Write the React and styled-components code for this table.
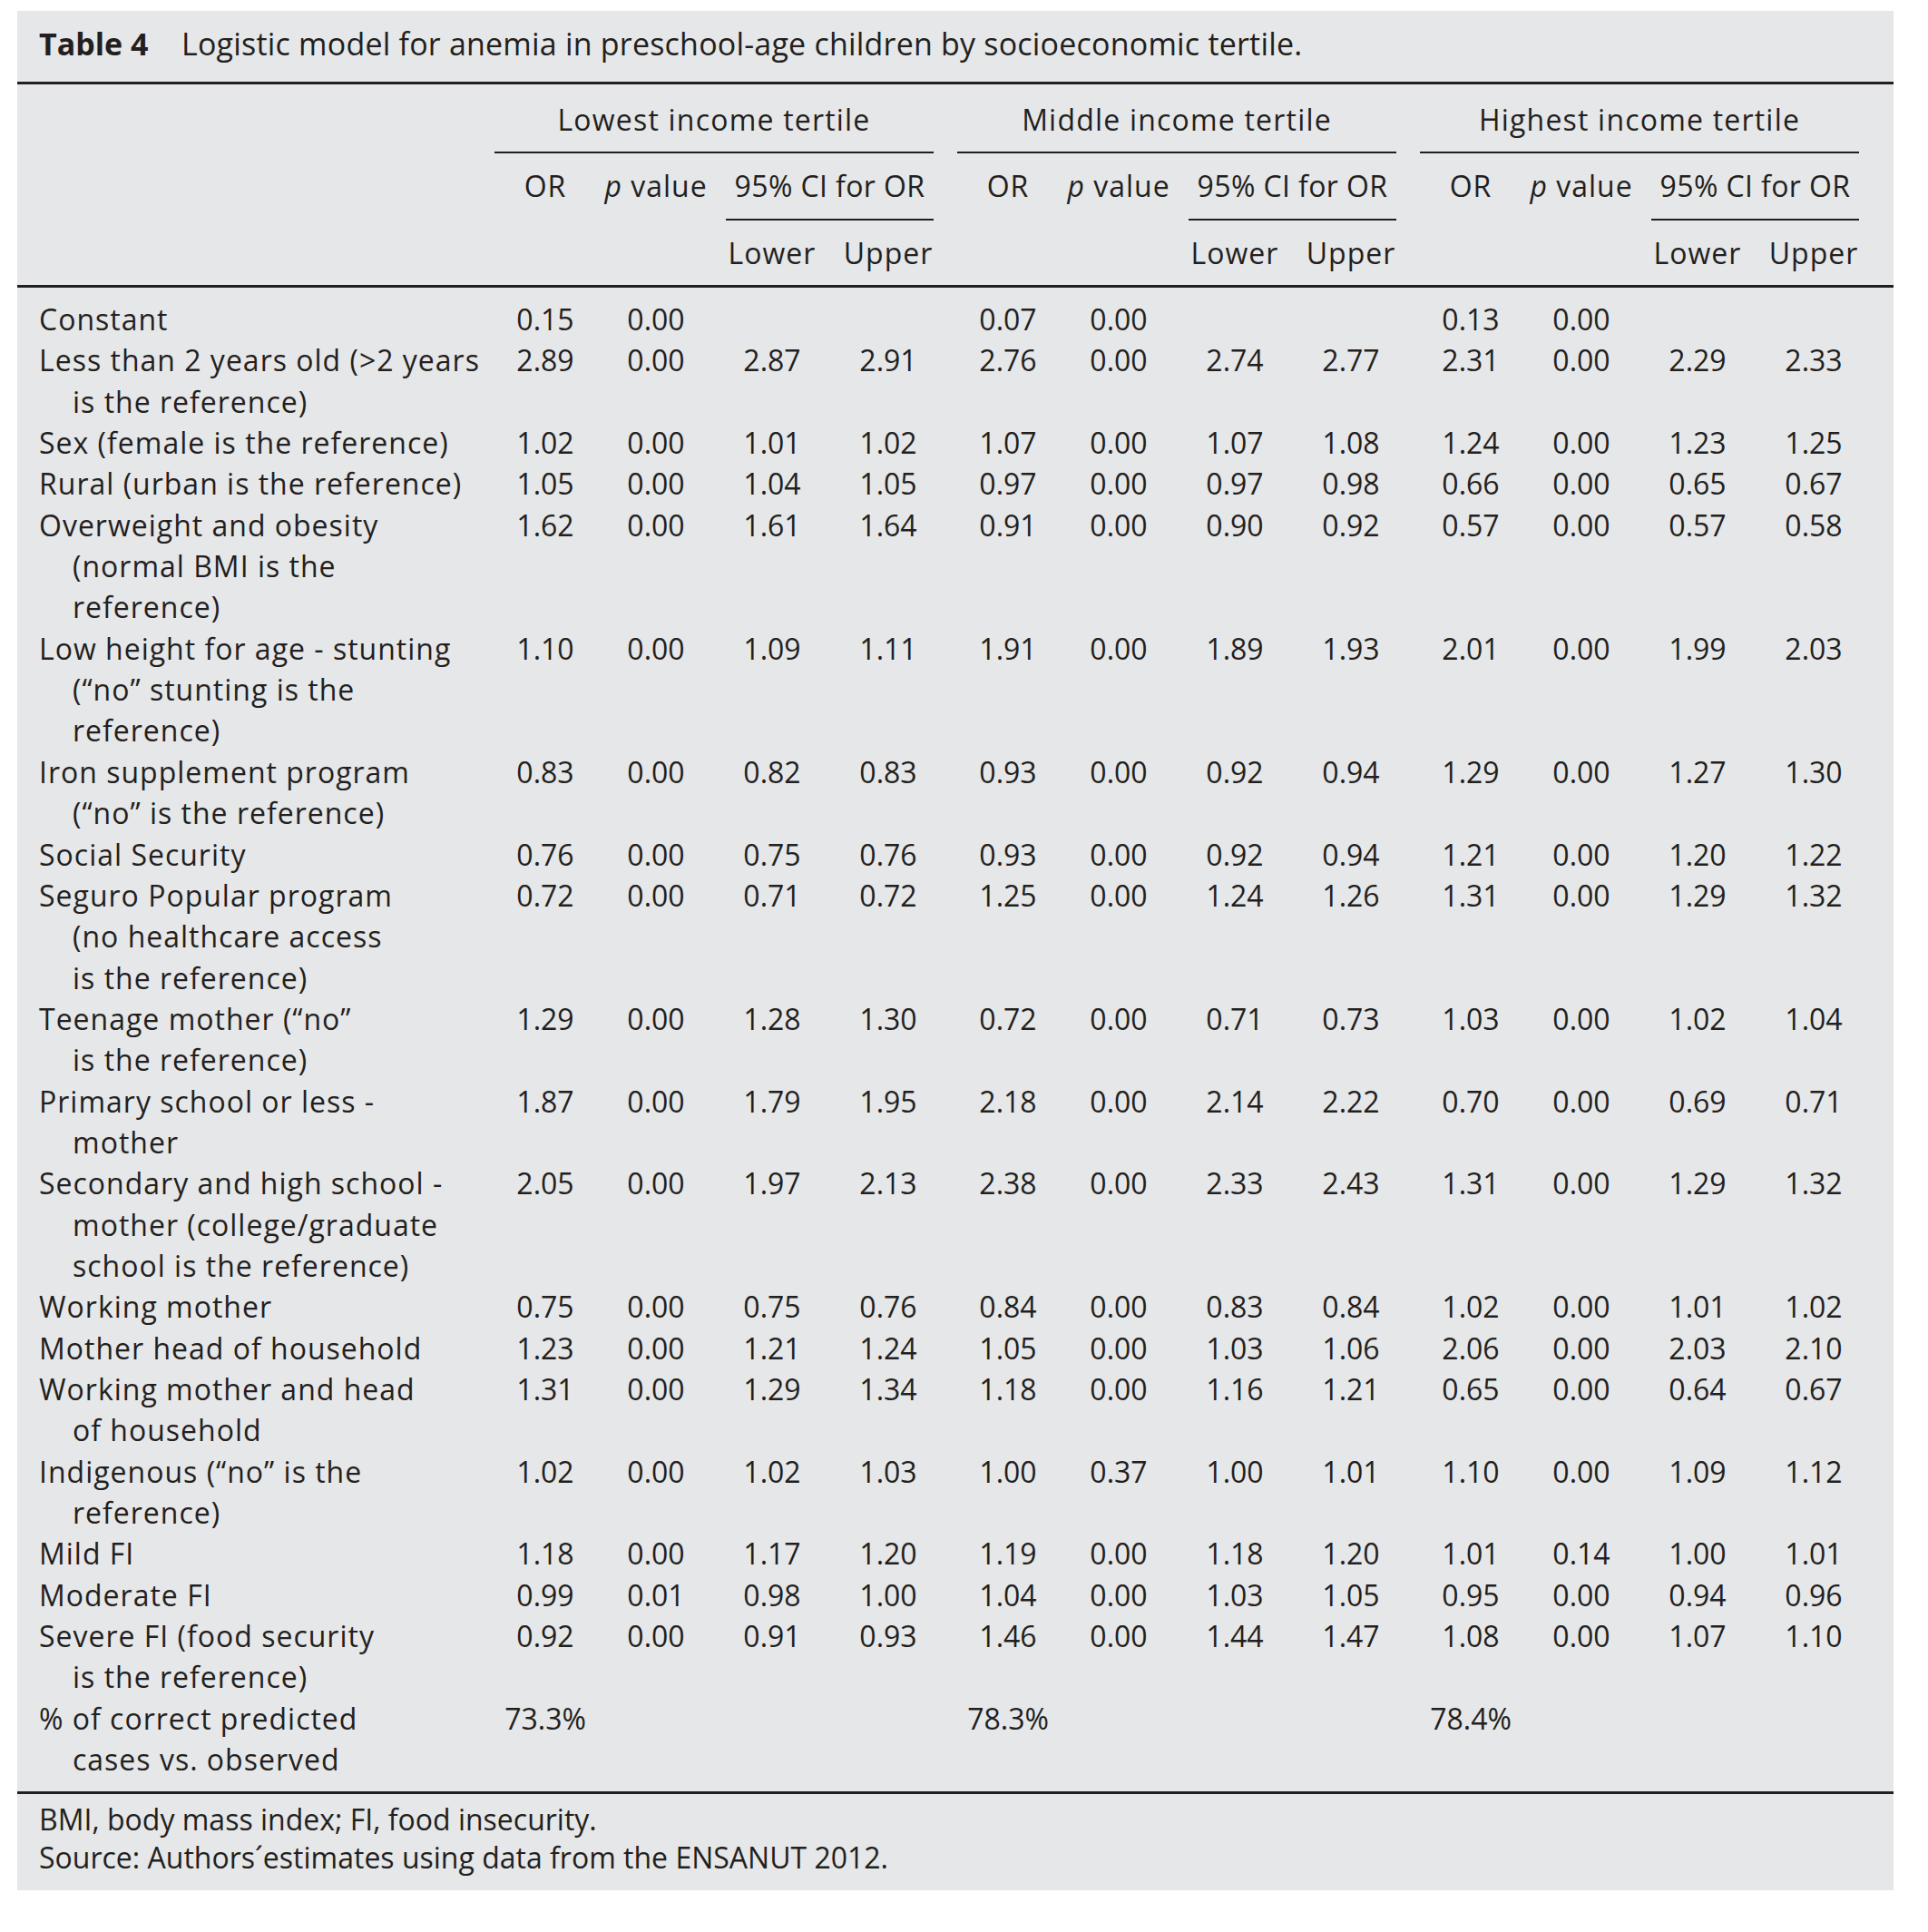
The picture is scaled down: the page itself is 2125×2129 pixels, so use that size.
import React from 'react';
import styled, { createGlobalStyle } from 'styled-components';

const GlobalStyle = createGlobalStyle`
  html, body {
    margin: 0;
    padding: 0;
    background: #ffffff;
  }
  body {
    font-family: "Open Sans", "Liberation Sans", sans-serif;
    color: #231f20;
  }
`;

const groups = ['Lowest income tertile', 'Middle income tertile', 'Highest income tertile'];

const rows = [
  { label: ['Constant'], data: [['0.15', '0.00', '', ''], ['0.07', '0.00', '', ''], ['0.13', '0.00', '', '']] },
  { label: ['Less than 2 years old (>2 years', 'is the reference)'], data: [['2.89', '0.00', '2.87', '2.91'], ['2.76', '0.00', '2.74', '2.77'], ['2.31', '0.00', '2.29', '2.33']] },
  { label: ['Sex (female is the reference)'], data: [['1.02', '0.00', '1.01', '1.02'], ['1.07', '0.00', '1.07', '1.08'], ['1.24', '0.00', '1.23', '1.25']] },
  { label: ['Rural (urban is the reference)'], data: [['1.05', '0.00', '1.04', '1.05'], ['0.97', '0.00', '0.97', '0.98'], ['0.66', '0.00', '0.65', '0.67']] },
  { label: ['Overweight and obesity', '(normal BMI is the', 'reference)'], data: [['1.62', '0.00', '1.61', '1.64'], ['0.91', '0.00', '0.90', '0.92'], ['0.57', '0.00', '0.57', '0.58']] },
  { label: ['Low height for age - stunting', '(\u201cno\u201d stunting is the', 'reference)'], data: [['1.10', '0.00', '1.09', '1.11'], ['1.91', '0.00', '1.89', '1.93'], ['2.01', '0.00', '1.99', '2.03']] },
  { label: ['Iron supplement program', '(\u201cno\u201d is the reference)'], data: [['0.83', '0.00', '0.82', '0.83'], ['0.93', '0.00', '0.92', '0.94'], ['1.29', '0.00', '1.27', '1.30']] },
  { label: ['Social Security'], data: [['0.76', '0.00', '0.75', '0.76'], ['0.93', '0.00', '0.92', '0.94'], ['1.21', '0.00', '1.20', '1.22']] },
  { label: ['Seguro Popular program', '(no healthcare access', 'is the reference)'], data: [['0.72', '0.00', '0.71', '0.72'], ['1.25', '0.00', '1.24', '1.26'], ['1.31', '0.00', '1.29', '1.32']] },
  { label: ['Teenage mother (\u201cno\u201d', 'is the reference)'], data: [['1.29', '0.00', '1.28', '1.30'], ['0.72', '0.00', '0.71', '0.73'], ['1.03', '0.00', '1.02', '1.04']] },
  { label: ['Primary school or less -', 'mother'], data: [['1.87', '0.00', '1.79', '1.95'], ['2.18', '0.00', '2.14', '2.22'], ['0.70', '0.00', '0.69', '0.71']] },
  { label: ['Secondary and high school -', 'mother (college/graduate', 'school is the reference)'], data: [['2.05', '0.00', '1.97', '2.13'], ['2.38', '0.00', '2.33', '2.43'], ['1.31', '0.00', '1.29', '1.32']] },
  { label: ['Working mother'], data: [['0.75', '0.00', '0.75', '0.76'], ['0.84', '0.00', '0.83', '0.84'], ['1.02', '0.00', '1.01', '1.02']] },
  { label: ['Mother head of household'], data: [['1.23', '0.00', '1.21', '1.24'], ['1.05', '0.00', '1.03', '1.06'], ['2.06', '0.00', '2.03', '2.10']] },
  { label: ['Working mother and head', 'of household'], data: [['1.31', '0.00', '1.29', '1.34'], ['1.18', '0.00', '1.16', '1.21'], ['0.65', '0.00', '0.64', '0.67']] },
  { label: ['Indigenous (\u201cno\u201d is the', 'reference)'], data: [['1.02', '0.00', '1.02', '1.03'], ['1.00', '0.37', '1.00', '1.01'], ['1.10', '0.00', '1.09', '1.12']] },
  { label: ['Mild FI'], data: [['1.18', '0.00', '1.17', '1.20'], ['1.19', '0.00', '1.18', '1.20'], ['1.01', '0.14', '1.00', '1.01']] },
  { label: ['Moderate FI'], data: [['0.99', '0.01', '0.98', '1.00'], ['1.04', '0.00', '1.03', '1.05'], ['0.95', '0.00', '0.94', '0.96']] },
  { label: ['Severe FI (food security', 'is the reference)'], data: [['0.92', '0.00', '0.91', '0.93'], ['1.46', '0.00', '1.44', '1.47'], ['1.08', '0.00', '1.07', '1.10']] },
  { label: ['% of correct predicted', 'cases vs. observed'], data: [['73.3%', '', '', ''], ['78.3%', '', '', ''], ['78.4%', '', '', '']] },
];

export default function App() {
  return (
    <>
      <GlobalStyle />
      <Page>
        <Panel>
          <Caption>
            <CaptionLabel>Table 4</CaptionLabel>
            Logistic model for anemia in preschool-age children by socioeconomic tertile.
          </Caption>

          <Head>
            <Row>
              <span />
              {groups.map((g) => (
                <GroupTitle key={g}>{g}</GroupTitle>
              ))}
            </Row>
            <Row>
              <span />
              {groups.map((g) => (
                <Group key={g}>
                  <HeadCell>OR</HeadCell>
                  <HeadCell>
                    <i>p</i> value
                  </HeadCell>
                  <CiHead>95% CI for OR</CiHead>
                </Group>
              ))}
            </Row>
            <Row>
              <span />
              {groups.map((g) => (
                <Group key={g}>
                  <span />
                  <span />
                  <HeadCell $low>Lower</HeadCell>
                  <HeadCell $low $shift>Upper</HeadCell>
                </Group>
              ))}
            </Row>
          </Head>

          <Body>
            {rows.map((r) => (
              <Row key={r.label[0]}>
                <Label>
                  {r.label.map((line, i) => (
                    <LabelLine key={line} $cont={i > 0}>
                      {line}
                    </LabelLine>
                  ))}
                </Label>
                {r.data.map((g, gi) => (
                  <Group key={gi}>
                    {g.map((v, vi) => (
                      <Num key={vi} $shift={vi === 3}>
                        {v}
                      </Num>
                    ))}
                  </Group>
                ))}
              </Row>
            ))}
          </Body>

          <Notes>
            <div>BMI, body mass index; FI, food insecurity.</div>
            <div>Source: Authors´estimates using data from the ENSANUT 2012.</div>
          </Notes>
        </Panel>
      </Page>
    </>
  );
}

const Page = styled.div`
  padding: 12px 0 40px 19px;
`;

const Panel = styled.div`
  width: 2068px;
  background: #e6e7e9;
  font-size: 32px;
`;

const Caption = styled.div`
  font-size: 34px;
  line-height: 45px;
  letter-spacing: 0.2px;
  padding: 14px 24px 19px;
  white-space: nowrap;
`;

const CaptionLabel = styled.b`
  display: inline-block;
  width: 157px;
  font-weight: 700;
  letter-spacing: 0;
`;

const Head = styled.div`
  border-top: 3px solid #231f20;
  padding-top: 16px;
`;

const Row = styled.div`
  display: grid;
  grid-template-columns: 476px repeat(3, 484px);
  column-gap: 26px;
  padding-left: 24px;
  line-height: 45.34px;
`;

const Group = styled.div`
  display: grid;
  grid-template-columns: 112px 132px 124px 116px;
  align-items: start;
`;

const GroupTitle = styled.div`
  text-align: center;
  letter-spacing: 1.2px;
  padding-bottom: 13px;
  border-bottom: 2px solid #231f20;
`;

const HeadCell = styled.div`
  text-align: center;
  white-space: nowrap;
  letter-spacing: 1px;
  padding-top: 13px;
  padding-bottom: ${(p) => (p.$low ? '13px' : '0')};
  padding-left: ${(p) => (p.$shift ? '16px' : '0')};
`;

const CiHead = styled.div`
  grid-column: 3 / span 2;
  margin-left: 11px;
  text-align: center;
  white-space: nowrap;
  letter-spacing: 0.4px;
  padding: 13px 0 13px;
  border-bottom: 2px solid #231f20;
`;

const Body = styled.div`
  border-top: 3px solid #231f20;
  padding: 12px 0 13px;
`;

const Label = styled.div`
  display: flex;
  flex-direction: column;
`;

const LabelLine = styled.span`
  white-space: nowrap;
  letter-spacing: 1px;
  padding-left: ${(p) => (p.$cont ? '37px' : '0')};
`;

const Num = styled.span`
  text-align: center;
  white-space: nowrap;
  padding-left: ${(p) => (p.$shift ? '16px' : '0')};
`;

const Notes = styled.div`
  border-top: 3px solid #231f20;
  padding: 7px 24px 15px;
  line-height: 42px;
`;
